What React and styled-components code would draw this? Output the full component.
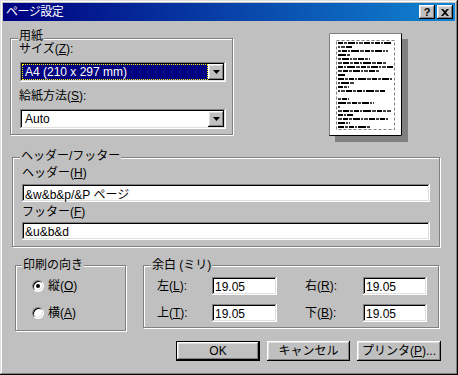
import React from "react";
import styled, { createGlobalStyle } from "styled-components";

const Global = createGlobalStyle`
  html, body {
    margin: 0;
    padding: 0;
    background: #c0c0c0;
  }
  body {
    font-family: "Liberation Sans", "Noto Sans CJK JP", sans-serif;
    font-size: 12px;
    color: #000;
  }
`;

const raised = `
  background: #c0c0c0;
  box-shadow: inset -1px -1px #000, inset 1px 1px #fff, inset -2px -2px #808080, inset 2px 2px #dfdfdf;
`;

const sunken = `
  background: #fff;
  box-shadow: inset -1px -1px #fff, inset 1px 1px #808080, inset -2px -2px #dfdfdf, inset 2px 2px #000;
`;

const Window = styled.div`
  box-sizing: border-box;
  width: 458px;
  height: 375px;
  padding: 3px;
  background: #c0c0c0;
  box-shadow: inset -1px -1px #000, inset 1px 1px #dfdfdf, inset -2px -2px #808080, inset 2px 2px #fff;
  display: flex;
  flex-direction: column;
`;

const TitleBar = styled.div`
  height: 18px;
  flex: none;
  display: flex;
  align-items: center;
  padding: 0 2px 0 3px;
  background: linear-gradient(90deg, #000080 0%, #1084d0 100%);
  color: #fff;
`;

const TitleText = styled.span`
  flex: 1;
  line-height: 18px;
  letter-spacing: -0.5px;
`;

const CaptionButtons = styled.div`
  display: flex;
  gap: 2px;
`;

const CaptionButton = styled.div`
  ${raised}
  width: 16px;
  height: 14px;
  display: flex;
  align-items: center;
  justify-content: center;
  color: #000;
  font-weight: bold;
  font-size: 11px;
  line-height: 14px;
`;

const Body = styled.div`
  flex: 1;
  display: flex;
  flex-direction: column;
  padding: 12px 14px 0 7px;
`;

const TopRow = styled.div`
  display: flex;
  align-items: flex-start;
  gap: 96px;
`;

const BottomRow = styled.div`
  display: flex;
  align-items: flex-start;
  gap: 17px;
  margin: 18px 0 0 5px;
`;

const Group = styled.div`
  box-sizing: border-box;
  flex: none;
  width: ${p => p.$w}px;
  height: ${p => p.$h}px;
  margin: ${p => p.$m || "0"};
  padding: 0 0 0 ${p => p.$pl}px;
  border: 1px solid #808080;
  box-shadow: 1px 1px 0 #fff, inset 1px 1px 0 #fff;
  display: flex;
  flex-direction: column;
  align-items: flex-start;
`;

const GroupTitle = styled.div`
  margin: ${p => p.$mt}px 0 0 ${p => p.$ml}px;
  padding: 0 1px;
  line-height: 14px;
  height: 14px;
  background: #c0c0c0;
  white-space: nowrap;
`;

const Label = styled.div`
  margin: ${p => p.$mt}px 0 0 ${p => p.$ml || 0}px;
  line-height: 14px;
  height: 14px;
  white-space: nowrap;
`;

const Key = styled.span`
  text-decoration: underline;
  text-underline-offset: 1px;
`;

const Combo = styled.div`
  ${sunken}
  box-sizing: border-box;
  width: 206px;
  height: 20px;
  margin: ${p => p.$mt}px 0 0 1px;
  padding: 2px;
  display: flex;
`;

const ComboValue = styled.div`
  flex: 1;
  box-sizing: border-box;
  line-height: 14px;
  padding: 0 2px;
  white-space: nowrap;
  overflow: hidden;
  background: ${p => (p.$selected ? "#000080" : "#fff")};
  color: ${p => (p.$selected ? "#fff" : "#000")};
  border: 1px ${p => (p.$selected ? "dotted #ffff00" : "solid #fff")};
`;

const DropButton = styled.div`
  ${raised}
  width: 16px;
  height: 16px;
  flex: none;
  display: flex;
  align-items: center;
  justify-content: center;
`;

const Preview = styled.svg`
  flex: none;
  display: block;
`;

const Edit = styled.input`
  ${sunken}
  box-sizing: border-box;
  width: ${p => p.$w}px;
  height: 18px;
  margin: ${p => p.$mt || 0}px 0 0 0;
  padding: 1px 3px 0;
  border: none;
  outline: none;
  font: inherit;
  font-size: 12px;
  line-height: 14px;
  color: #000;
`;

const RadioRow = styled.label`
  display: flex;
  align-items: center;
  gap: 4px;
  margin: ${p => p.$mt}px 0 0 10px;
  line-height: 14px;
  white-space: nowrap;
`;

const RadioDot = styled.span`
  box-sizing: border-box;
  width: 12px;
  height: 12px;
  border-radius: 50%;
  background: #fff;
  border: 1px solid;
  border-color: #808080 #fff #fff #808080;
  box-shadow: inset 1px 1px 0 #000, inset -1px -1px 0 #dfdfdf;
  display: flex;
  align-items: center;
  justify-content: center;
  &::after {
    content: "";
    width: 4px;
    height: 4px;
    border-radius: 50%;
    background: ${p => (p.$checked ? "#000" : "transparent")};
  }
`;

const MarginGrid = styled.div`
  display: grid;
  grid-template-columns: 55px 65px 28px 58px 64px;
  row-gap: 9px;
  align-items: center;
  margin: 5px 0 0 6px;
`;

const ButtonRow = styled.div`
  display: flex;
  justify-content: flex-end;
  gap: 7px;
  margin-top: 10px;
`;

const Button = styled.div`
  ${raised}
  box-sizing: border-box;
  width: ${p => p.$w}px;
  height: 20px;
  display: flex;
  align-items: center;
  justify-content: center;
  line-height: 14px;
  ${p =>
    p.$default &&
    `
    border: 1px solid #000;
  `}
`;

const Arrow = () => (
  <svg width="7" height="4" viewBox="0 0 7 4">
    <path d="M0 0h7L3.5 4z" fill="#000" />
  </svg>
);

const CloseGlyph = () => (
  <svg width="8" height="7" viewBox="0 0 8 7">
    <path d="M0 0h2l2 2 2-2h2L5 3.5 8 7H6L4 5 2 7H0l3-3.5z" fill="#000" />
  </svg>
);

// text rows of the thumbnail: [y, right end]
const rows = [
  [9, 62], [13, 24], [17, 59], [21, 21], [25, 41], [29, 58], [33, 64],
  [37, 50], [41, 17], [45, 64], [49, 26], [53, 20], [57, 57],
  [65, 20], [69, 45], [73, 11], [77, 62], [81, 24], [85, 59], [89, 21], [93, 41],
];

const wordWidths = [5, 3, 7, 2, 4, 6, 3, 5, 2, 8, 4];

const words = (y, end, seed) => {
  const out = [];
  let x = 9;
  let i = seed;
  while (x < end) {
    const w = Math.min(wordWidths[i % wordWidths.length], end - x);
    out.push([x, w]);
    x += w + 1;
    i++;
  }
  return out;
};

const PagePreview = () => (
  <Preview width="80" height="110" viewBox="0 0 80 110">
    <rect x="6" y="6" width="73" height="103" fill="#808080" />
    <rect x="0" y="0" width="73" height="103" fill="#fff" />
    <path d="M0.5 103V0.5H72.5" stroke="#808080" fill="none" />
    <path d="M72.5 0.5V102.5H0.5" stroke="#000" fill="none" />
    <rect x="7.5" y="7.5" width="58" height="89" fill="none" stroke="#808080" strokeDasharray="3 2" />
    {rows.map(([y, end], r) =>
      words(y, end, r * 3).map(([x, w]) => (
        <rect key={`${y}-${x}`} x={x} y={y} width={w} height="2" fill={w > 4 ? "#000" : "#404040"} />
      ))
    )}
  </Preview>
);

export default function App() {
  return (
    <>
      <Global />
      <Window>
        <TitleBar>
          <TitleText>ページ設定</TitleText>
          <CaptionButtons>
            <CaptionButton>?</CaptionButton>
            <CaptionButton>
              <CloseGlyph />
            </CaptionButton>
          </CaptionButtons>
        </TitleBar>

        <Body>
          <TopRow>
            <Group $w={223} $h={97} $pl={8} $m="5px 0 0 0">
              <GroupTitle $mt={-10} $ml={-1}>用紙</GroupTitle>
              <Label $mt={-1}>サイズ(<Key>Z</Key>):</Label>
              <Combo $mt={6}>
                <ComboValue $selected>A4 (210 x 297 mm)</ComboValue>
                <DropButton>
                  <Arrow />
                </DropButton>
              </Combo>
              <Label $mt={7}>給紙方法(<Key>S</Key>):</Label>
              <Combo $mt={6}>
                <ComboValue>Auto</ComboValue>
                <DropButton>
                  <Arrow />
                </DropButton>
              </Combo>
            </Group>
            <PagePreview />
          </TopRow>

          <Group $w={428} $h={90} $pl={9} $m="14px 0 0 2px">
            <GroupTitle $mt={-9} $ml={-2}>ヘッダー/フッター</GroupTitle>
            <Label $mt={3}>ヘッダー(<Key>H</Key>)</Label>
            <Edit $w={408} $mt={4} readOnly value="&w&b&p/&P ページ" />
            <Label $mt={3}>フッター(<Key>F</Key>)</Label>
            <Edit $w={408} $mt={3} readOnly value="&u&b&d" />
          </Group>

          <BottomRow>
            <Group $w={111} $h={66} $pl={6}>
              <GroupTitle $mt={-8} $ml={0}>印刷の向き</GroupTitle>
              <RadioRow $mt={7}>
                <RadioDot $checked />
                <span>縦(<Key>O</Key>)</span>
              </RadioRow>
              <RadioRow $mt={13}>
                <RadioDot />
                <span>横(<Key>A</Key>)</span>
              </RadioRow>
            </Group>

            <Group $w={296} $h={63} $pl={7}>
              <GroupTitle $mt={-8} $ml={0}>余白 (ミリ)</GroupTitle>
              <MarginGrid>
                <Label $mt={0}>左(<Key>L</Key>):</Label>
                <Edit $w={65} readOnly value="19.05" />
                <span />
                <Label $mt={0}>右(<Key>R</Key>):</Label>
                <Edit $w={64} readOnly value="19.05" />
                <Label $mt={0}>上(<Key>T</Key>):</Label>
                <Edit $w={65} readOnly value="19.05" />
                <span />
                <Label $mt={0}>下(<Key>B</Key>):</Label>
                <Edit $w={64} readOnly value="19.05" />
              </MarginGrid>
            </Group>
          </BottomRow>

          <ButtonRow>
            <Button $w={84} $default>OK</Button>
            <Button $w={83}>キャンセル</Button>
            <Button $w={84}>
              <span>プリンタ(<Key>P</Key>)...</span>
            </Button>
          </ButtonRow>
        </Body>
      </Window>
    </>
  );
}
